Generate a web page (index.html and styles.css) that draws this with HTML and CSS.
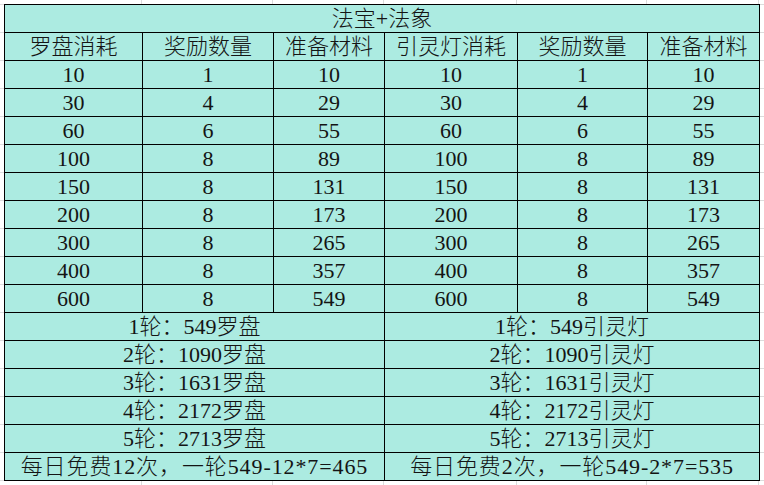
FILE: index.html
```html
<!DOCTYPE html>
<html lang="zh-CN">
<head>
<meta charset="utf-8">
<title>法宝+法象</title>
<link rel="stylesheet" href="styles.css">
</head>
<body>
<div class="sheet">
<table class="grid">
<colgroup>
<col class="c1"><col class="c2"><col class="c3"><col class="c4"><col class="c5"><col class="c6">
</colgroup>
<tbody>
<tr><td colspan="6">法宝+法象</td></tr>
<tr><td>罗盘消耗</td><td>奖励数量</td><td>准备材料</td><td>引灵灯消耗</td><td>奖励数量</td><td>准备材料</td></tr>
<tr><td>10</td><td>1</td><td>10</td><td>10</td><td>1</td><td>10</td></tr>
<tr><td>30</td><td>4</td><td>29</td><td>30</td><td>4</td><td>29</td></tr>
<tr><td>60</td><td>6</td><td>55</td><td>60</td><td>6</td><td>55</td></tr>
<tr><td>100</td><td>8</td><td>89</td><td>100</td><td>8</td><td>89</td></tr>
<tr><td>150</td><td>8</td><td>131</td><td>150</td><td>8</td><td>131</td></tr>
<tr><td>200</td><td>8</td><td>173</td><td>200</td><td>8</td><td>173</td></tr>
<tr><td>300</td><td>8</td><td>265</td><td>300</td><td>8</td><td>265</td></tr>
<tr><td>400</td><td>8</td><td>357</td><td>400</td><td>8</td><td>357</td></tr>
<tr><td>600</td><td>8</td><td>549</td><td>600</td><td>8</td><td>549</td></tr>
<tr><td colspan="3">1轮：549罗盘</td><td colspan="3">1轮：549引灵灯</td></tr>
<tr><td colspan="3">2轮：1090罗盘</td><td colspan="3">2轮：1090引灵灯</td></tr>
<tr><td colspan="3">3轮：1631罗盘</td><td colspan="3">3轮：1631引灵灯</td></tr>
<tr><td colspan="3">4轮：2172罗盘</td><td colspan="3">4轮：2172引灵灯</td></tr>
<tr><td colspan="3">5轮：2713罗盘</td><td colspan="3">5轮：2713引灵灯</td></tr>
<tr class="foot"><td colspan="3">每日免费12次，一轮549-12*7=465</td><td colspan="3">每日免费2次，一轮549-2*7=535</td></tr>
</tbody>
</table>
</div>
</body>
</html>
```
FILE: styles.css
```css
html, body {
  margin: 0;
  padding: 0;
  background: #fff;
}
.sheet {
  box-sizing: border-box;
  width: 764px;
  height: 485px;
  padding: 4px 0 0 4px;
  overflow: hidden;
  background-color: #fff;
  background-image:
    linear-gradient(to right,
      transparent 0 141px, #dcdcdc 141px 142px,
      transparent 142px 272px, #dcdcdc 272px 273px,
      transparent 273px 383px, #dcdcdc 383px 384px,
      transparent 384px 516px, #dcdcdc 516px 517px,
      transparent 517px 646px, #dcdcdc 646px 647px,
      transparent 647px 758px, #dcdcdc 758px 759px,
      transparent 759px),
    repeating-linear-gradient(to bottom, #dcdcdc 0 1px, transparent 1px 28px);
  background-position: 0 0, 0 4px;
}
.grid {
  border-collapse: collapse;
  table-layout: fixed;
  width: 756px;
  background: #acebe1;
  font-family: "Liberation Serif", "Noto Sans CJK SC", serif;
  font-size: 22px;
  font-weight: 300;
  color: #141414;
}
.c1 { width: 138px; }
.c2 { width: 131px; }
.c3 { width: 111px; }
.c4 { width: 133px; }
.c5 { width: 130px; }
.c6 { width: 112px; }
.grid td {
  height: 27px;
  padding: 0;
  border: 1px solid #000;
  text-align: center;
  vertical-align: bottom;
  line-height: 26px;
  white-space: nowrap;
  overflow: hidden;
}
.grid .foot td {
  letter-spacing: 0.9px;
}
```
